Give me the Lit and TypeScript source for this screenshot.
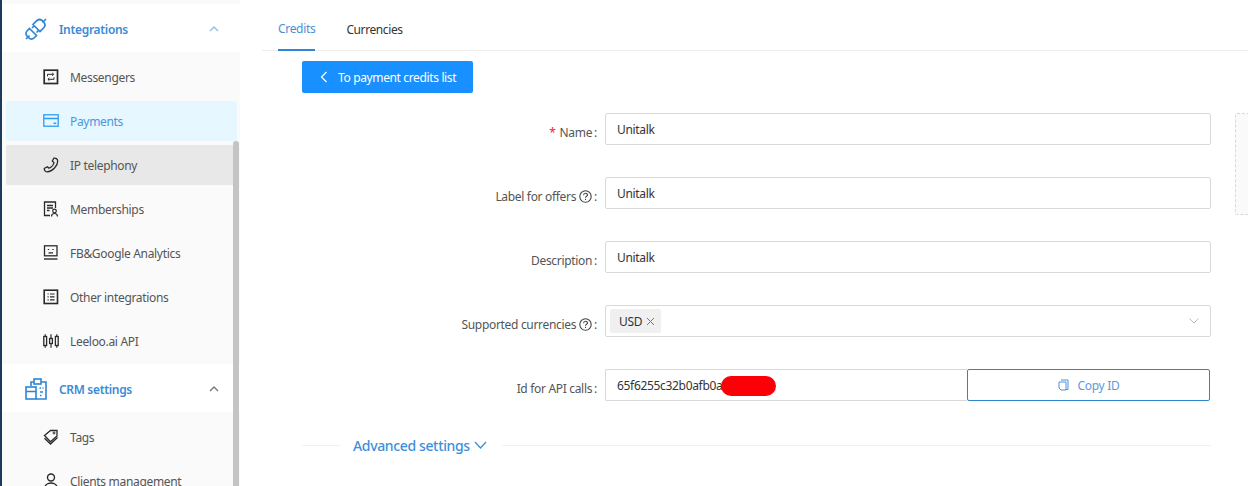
import { LitElement, html, css, svg } from 'lit';
import { customElement } from 'lit/decorators.js';

const icons: Record<string, unknown> = {
  messengers: svg`<rect x="1.2" y="1.2" width="13.300" height="13.300" stroke-width="1.700"/><path d="M4.500 7.300V5.300h6M9.200 3.900l1.500 1.400-1.500 1.400M11 8.300v2H5M6.400 8.900 4.900 10.300l1.500 1.400" stroke-width="1"/>`,
  payments: svg`<rect x="0.800" y="1.800" width="14.400" height="11.400" stroke-width="1.300"/><path d="M1 5.500h14" stroke-width="1.500"/><path d="M10.500 10.300h2.800" stroke-width="1.500"/>`,
  phone: svg`<path d="M10.800 1.200C12.600.6 14.600 2 14.700 4c.2 4.500-5.200 10.600-10.500 10.800-1.800.1-3.200-1.500-2.900-3.300l3.100-1.800L6 11.200c2-.7 4.500-3.400 5-5.600L9.300 4z" stroke-width="1.300"/>`,
  memberships: svg`<path d="M7 14.500H1.500V1h11v6M4 4.500h6M4 7h6M4 9.500h2.500" stroke-width="1.300"/><circle cx="11.500" cy="10" r="1.800" stroke-width="1.200"/><path d="M8.500 15.500c0-4 6-4 6 0" stroke-width="1.200"/>`,
  analytics: svg`<rect x="1.500" y="0.800" width="12.500" height="10" stroke-width="1.300"/><path d="M1 14h13.500" stroke-width="1.400"/><path d="M4.800 4.500h1.400M9.300 4.500h1.400M5.500 7.800h4.500" stroke-width="1.200"/>`,
  other: svg`<rect x="1.200" y="1.200" width="13.300" height="13.300" stroke-width="1.600"/><path d="M4.500 5h1.200M7 5h4.500M4.500 7.900h1.200M7 7.900h4.500M4.500 10.800h1.200M7 10.800h4.500" stroke-width="1.200"/>`,
  api: svg`<rect x="0.800" y="3.500" width="2.800" height="9" stroke-width="1.300"/><path d="M2.200 1.200v2.300M2.200 12.500v2.300M8 1.200v4.300M8 10.500v4.300M13.800 1.200v2.300M13.800 12.500v2.300" stroke-width="1.200"/><rect x="6.600" y="5.500" width="2.800" height="5" stroke-width="1.300"/><rect x="12.400" y="3.500" width="2.800" height="9" stroke-width="1.300"/>`,
  tag: svg`<path d="M1.500 6.500 7.500 1.500h6.500v5.500l-6.500 5.800z" stroke-width="1.300"/><path d="M1.500 9.200 7.500 15l7-6.500" stroke-width="1.300"/><circle cx="11" cy="4" r="1" stroke-width="1"/>`,
  user: svg`<circle cx="8" cy="4.500" r="3.500" stroke-width="1.400"/><path d="M1.500 16c0-8 13-8 13 0" stroke-width="1.400"/>`,
};

const subItems1 = [
  { icon: 'messengers', label: 'Messengers' },
  { icon: 'payments', label: 'Payments', cls: 'active' },
  { icon: 'phone', label: 'IP telephony', cls: 'hover' },
  { icon: 'memberships', label: 'Memberships' },
  { icon: 'analytics', label: 'FB&Google Analytics' },
  { icon: 'other', label: 'Other integrations' },
  { icon: 'api', label: 'Leeloo.ai API' },
];

const subItems2 = [
  { icon: 'tag', label: 'Tags' },
  { icon: 'user', label: 'Clients management' },
];

const helpIcon = html`<svg class="help" viewBox="0 0 13 13" fill="none" stroke="currentColor" stroke-width="1.100">
  <circle cx="6.500" cy="6.500" r="5.700"/>
  <path d="M4.600 5.200c0-2.500 3.900-2.500 3.900-.2 0 1.300-2 1.300-2 2.800"/>
  <path d="M6.500 8.800v1.200"/>
</svg>`;

@customElement('app-root')
export class AppRoot extends LitElement {
  static styles = css`
    :host {
      display: flex;
      width: 1248px;
      height: 486px;
      overflow: hidden;
      background: #fff;
      font-family: 'Noto Sans', 'Open Sans', sans-serif;
      font-size: 12px;
      letter-spacing: -0.32px;
      color: #444;
    }

    .sidebar {
      position: relative;
      width: 240px;
      flex: none;
      box-sizing: border-box;
      border-left: 2px solid #1b3a5c;
      padding-top: 4px;
      background: #fafafa;
      height: 486px;
      overflow: hidden;
    }

    .group-head {
      display: flex;
      align-items: center;
      box-sizing: border-box;
      height: 48px;
      padding: 2px 21px 0 23px;
      background: #fff;
      color: #3a8bd8;
      font-weight: 600;
      width: 100%;
    }

    .group-head svg.big {
      width: 22px;
      height: 22px;
      margin-right: 12px;
      flex: none;
    }

    .group-head .title {
      flex: 1;
    }

    .group-head .arrow {
      width: 10px;
      height: 6px;
    }

    .sub {
      display: flex;
      flex-direction: column;
      gap: 4px;
      padding: 5px 0 3px 4px;
      width: 231px;
    }

    .sub-item {
      display: flex;
      align-items: center;
      height: 40px;
      padding-left: 37px;
      color: #555;
      border-radius: 2px;
    }

    .sub-item svg {
      width: 16px;
      height: 16px;
      margin-right: 11px;
      flex: none;
      stroke: #2a2a2a;
      fill: none;
    }

    .sub-item.active {
      background: #e6f7ff;
      color: #4a96dd;
    }

    .sub-item.active svg {
      stroke: #2f9bf0;
    }

    .sub-item.hover {
      background: #e8e8e8;
    }

    .scrollbar {
      position: absolute;
      left: 231px;
      top: 141px;
      bottom: 0;
      width: 6px;
      border-radius: 3px 3px 0 0;
      background: #c4c4c4;
    }

    .main {
      flex: 1;
      min-width: 0;
      padding-left: 22px;
    }

    .tabs {
      display: flex;
      gap: 31px;
      height: 50px;
      padding-left: 16px;
      border-bottom: 1px solid #eee;
    }

    .tab {
      display: flex;
      align-items: center;
      height: 50px;
      padding-top: 8px;
      box-sizing: border-box;
      color: #333;
      letter-spacing: -0.4px;
    }

    .tab.active {
      color: #4a8fd8;
      border-bottom: 2px solid #2f86d6;
      height: 51px;
      padding-top: 7px;
      letter-spacing: -0.32px;
    }

    .content {
      padding: 10px 0 0 40px;
      display: flex;
      flex-direction: column;
    }

    .back {
      display: flex;
      align-items: center;
      width: 171px;
      height: 32px;
      box-sizing: border-box;
      padding-left: 18px;
      gap: 10px;
      background: #1890ff;
      border-radius: 2px;
      color: #fff;
      letter-spacing: -0.36px;
    }

    .back svg {
      width: 8px;
      height: 12px;
    }

    .body {
      display: flex;
      gap: 24px;
      margin-top: 20px;
    }

    .form {
      width: 909px;
      flex: none;
      display: flex;
      flex-direction: column;
      gap: 32px;
    }

    .row {
      display: grid;
      grid-template-columns: 303px 1fr;
      height: 32px;
    }

    .label {
      display: flex;
      align-items: center;
      justify-content: flex-end;
      padding: 6px 8px 0 0;
      color: #555;
    }

    .req {
      color: #f5222d;
      margin-right: 4px;
    }

    .colon {
      margin-left: 2px;
    }

    .help {
      width: 13px;
      height: 13px;
      margin-left: 3px;
      color: #444;
    }

    .field {
      display: flex;
      align-items: center;
      box-sizing: border-box;
      height: 32px;
      border: 1px solid #d9d9d9;
      border-radius: 2px;
      padding: 0 11px;
      color: #333;
    }

    .field.select {
      padding-left: 4px;
      justify-content: space-between;
    }

    .tagchip {
      display: flex;
      align-items: center;
      gap: 4px;
      height: 24px;
      padding: 0 6px 0 9px;
      background: #f0f0f0;
      border-radius: 2px;
    }

    .tagchip svg {
      width: 9px;
      height: 9px;
      stroke: #777;
    }

    .caret {
      width: 10px;
      height: 6px;
      stroke: #bbb;
    }

    .id-row {
      display: flex;
    }

    .id-field {
      width: 362px;
      border-right: none;
      border-radius: 2px 0 0 2px;
      position: relative;
    }

    .redact {
      position: absolute;
      left: 115px;
      top: 6px;
      width: 55px;
      height: 20px;
      border-radius: 10px;
      background: #fb0007;
    }

    .copy {
      flex: none;
      width: 243px;
      height: 32px;
      box-sizing: border-box;
      border: 1px solid #2f86c6;
      border-radius: 2px;
      display: flex;
      align-items: center;
      justify-content: center;
      gap: 9px;
      color: #5b9ae0;
    }

    .copy svg {
      width: 11px;
      height: 12px;
      stroke: #4a90d9;
    }

    .side-box {
      box-sizing: border-box;
      width: 60px;
      height: 102px;
      flex: none;
      border: 1px dashed #d9d9d9;
      background: #fafafa;
      border-radius: 2px;
    }

    .advanced {
      display: flex;
      align-items: center;
      width: 909px;
      margin-top: 28px;
      height: 32px;
    }

    .advanced .line {
      height: 1px;
      background: #f0f0f0;
    }

    .advanced .line.a {
      width: 38px;
    }

    .advanced .line.b {
      flex: 1;
    }

    .advanced .txt {
      display: flex;
      align-items: center;
      gap: 4px;
      padding: 0 15px 0 13px;
      color: #3d8fdb;
      font-size: 14px;
      font-weight: 500;
      letter-spacing: -0.36px;
    }

    .advanced svg {
      width: 13px;
      height: 8px;
      stroke: #3d8fdb;
    }
  `;

  private renderSub(items: { icon: string; label: string; cls?: string }[]) {
    return html`<div class="sub">
      ${items.map(
        (it) => html`<div class="sub-item ${it.cls ?? ''}">
          <svg viewBox="0 0 16 16">${icons[it.icon]}</svg>
          <span>${it.label}</span>
        </div>`
      )}
    </div>`;
  }

  render() {
    return html`
      <aside class="sidebar">
        <div class="group-head">
          <svg class="big" viewBox="0 0 22 22" fill="none" stroke="#2f86d6" stroke-width="1.700">
            <path d="M1 21l3.500-3.500M21 1l-3.500 3.500"/>
            <path d="M8 6.500 15 13.500l4-4a4 4 0 0 0 0-5l-2-2a4 4 0 0 0-5 0z"/>
            <path d="M4.500 10.500 11.500 17.500 9 20a3.500 3.500 0 0 1-5 0l-2-2a3.500 3.500 0 0 1 0-5z"/>
            <path d="M7 10l2-2M11.500 14.500l2-2"/>
          </svg>
          <span class="title">Integrations</span>
          <svg class="arrow" viewBox="0 0 10 6" fill="none" stroke="#8fc0ea" stroke-width="1.400"><path d="M1 5l4-4 4 4"/></svg>
        </div>
        ${this.renderSub(subItems1)}
        <div class="group-head">
          <svg class="big" viewBox="0 0 22 22" fill="none" stroke="#2f86d6" stroke-width="1.600">
            <path d="M6 8V4h3M16 4h5v17H11"/>
            <rect x="9" y="1" width="7" height="5" fill="#fff"/>
            <rect x="1" y="9" width="10" height="12" fill="#fff"/>
            <path d="M1 13.500h10M14.500 10h1.500M17.500 10h1M15 14h3M15 17.500h1.500"/>
          </svg>
          <span class="title">CRM settings</span>
          <svg class="arrow" viewBox="0 0 10 6" fill="none" stroke="#777" stroke-width="1.400"><path d="M1 5l4-4 4 4"/></svg>
        </div>
        ${this.renderSub(subItems2)}
        <div class="scrollbar"></div>
      </aside>
      <main class="main">
        <div class="tabs">
          <div class="tab active">Credits</div>
          <div class="tab">Currencies</div>
        </div>
        <div class="content">
          <div class="back">
            <svg viewBox="0 0 8 12" fill="none" stroke="#fff" stroke-width="1.200"><path d="M6.500 1 1.500 6l5 5"/></svg>
            <span>To payment credits list</span>
          </div>
          <div class="body">
            <div class="form">
              <div class="row">
                <div class="label"><span class="req">*</span>Name<span class="colon">:</span></div>
                <div class="field">Unitalk</div>
              </div>
              <div class="row">
                <div class="label">Label for offers${helpIcon}<span class="colon">:</span></div>
                <div class="field">Unitalk</div>
              </div>
              <div class="row">
                <div class="label">Description<span class="colon">:</span></div>
                <div class="field">Unitalk</div>
              </div>
              <div class="row">
                <div class="label">Supported currencies${helpIcon}<span class="colon">:</span></div>
                <div class="field select">
                  <div class="tagchip">USD
                    <svg viewBox="0 0 9 9" fill="none"><path d="M1 1l7 7M8 1 1 8"/></svg>
                  </div>
                  <svg class="caret" viewBox="0 0 10 6" fill="none"><path d="M.5.5 5 5 9.500.5"/></svg>
                </div>
              </div>
              <div class="row">
                <div class="label">Id for API calls<span class="colon">:</span></div>
                <div class="id-row">
                  <div class="field id-field">65f6255c32b0afb0a<div class="redact"></div></div>
                  <div class="copy">
                    <svg viewBox="0 0 11 12" fill="none"><path d="M3 1h7v9.500H8"/><path d="M1 3h7v8H3l-2-2z"/></svg>
                    <span>Copy ID</span>
                  </div>
                </div>
              </div>
            </div>
            <div class="side-box"></div>
          </div>
          <div class="advanced">
            <div class="line a"></div>
            <div class="txt">Advanced settings
              <svg viewBox="0 0 13 8" fill="none" stroke-width="1.300"><path d="M1 1l5.500 6L12 1"/></svg>
            </div>
            <div class="line b"></div>
          </div>
        </div>
      </main>
    `;
  }
}
